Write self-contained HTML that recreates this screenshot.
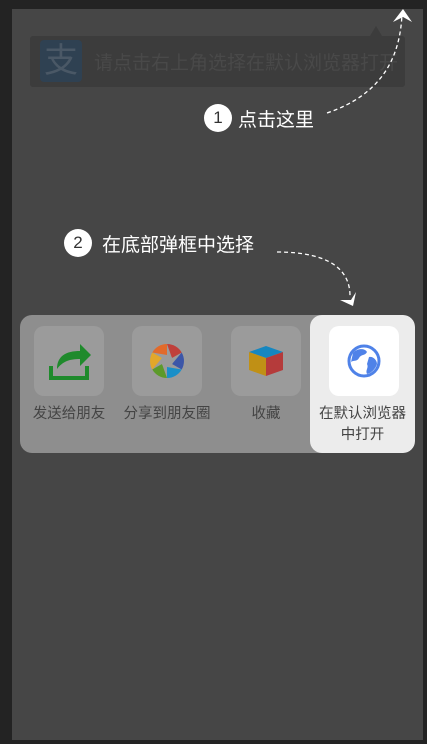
<!DOCTYPE html>
<html><head><meta charset="utf-8"><style>
*{margin:0;padding:0;box-sizing:border-box}
body{width:427px;height:744px;background:#232323;position:relative;overflow:hidden;font-family:"Liberation Sans","Noto Sans CJK SC",sans-serif}
.panel{position:absolute;left:12px;top:9px;width:411px;height:731px;background:#464646}
.banner{position:absolute;left:30px;top:36px;width:375px;height:51px;background:#3c3c3c;border-radius:3px}
.banner .ic{position:absolute;left:10px;top:4px;width:42px;height:42px;background:#2f4152;border-radius:4px;color:#4a5866;font-size:34px;line-height:42px;text-align:center}
.banner .t{position:absolute;left:64px;top:12px;font-size:19px;color:#494949;white-space:nowrap}
.num{position:absolute;width:28px;height:28px;border-radius:50%;background:#fff;color:#333;font-size:17px;line-height:28px;text-align:center}
.lbl{position:absolute;color:#fff;font-size:19px;white-space:nowrap}
.sheet{position:absolute;left:20px;top:315px;width:395px;height:138px;background:#8e8e8e;border-radius:12px;overflow:hidden}
.hl{position:absolute;left:290px;top:0;width:105px;height:138px;background:#ececec;border-radius:12px}
.item{position:absolute;top:11px;width:70px;height:70px;border-radius:10px;background:#9b9b9b}
.cap{position:absolute;top:89px;font-size:14.5px;color:#444;text-align:center;line-height:21px;white-space:nowrap}
</style></head><body>
<div class="panel"></div>
<div class="banner"><div class="ic">支</div><div class="t">请点击右上角选择在默认浏览器打开</div></div>
<svg style="position:absolute;left:0;top:0" width="427" height="744">
<polygon points="370,36 376,26 382,36" fill="#3c3c3c"/>
<path d="M327,113 C380,95 400,60 402,14" stroke="#fff" stroke-width="1.3" fill="none" stroke-dasharray="4,3"/>
<path d="M393,22 L403,9 L412,22 L403,17 Z" fill="#fff"/>
<path d="M277,252 C330,252 350,270 350,296" stroke="#fff" stroke-width="1.3" fill="none" stroke-dasharray="4,3"/>
<path d="M340,300 L353,306 L356,292 L351,300 Z" fill="#fff"/>
</svg>
<div class="num" style="left:204px;top:104px">1</div>
<div class="lbl" style="left:238px;top:105px">点击这里</div>
<div class="num" style="left:64px;top:229px">2</div>
<div class="lbl" style="left:102px;top:230px">在底部弹框中选择</div>
<div class="sheet">
<div class="hl"></div>
<div class="item" style="left:14px"><svg width="70" height="70"><path d="M17,40 v12 h36 v-12" stroke="#1f8a2c" stroke-width="4" fill="none"/><path d="M23,43 C23,30 32,25 46,25 v-7 l11,11 l-11,11 v-7 C36,33 29,35 23,43 Z" fill="#1f8a2c"/></svg></div>
<div class="item" style="left:112px"><svg width="70" height="70"><g transform="translate(35,35)">
<path d="M0,-17 A17,17 0 0 1 14.7,-8.5 L5,-3 Z" fill="#c0403b"/><path d="M14.7,-8.5 A17,17 0 0 1 14.7,8.5 L5,3 Z" fill="#3c56a8"/><path d="M14.7,8.5 A17,17 0 0 1 0,17 L0,6 Z" fill="#1a8fc8"/><path d="M0,17 A17,17 0 0 1 -14.7,8.5 L-5,3 Z" fill="#5c9a2a"/><path d="M-14.7,8.5 A17,17 0 0 1 -14.7,-8.5 L-5,-3 Z" fill="#e2a72a"/><path d="M-14.7,-8.5 A17,17 0 0 1 0,-17 L0,-6 Z" fill="#e26a2a"/><circle r="6" fill="#9b9b9b"/></g></svg></div>
<div class="item" style="left:211px"><svg width="70" height="70"><path d="M18,26 L35,20 L52,26 L35,32 Z" fill="#1687c0"/><path d="M18,26 L35,32 V50 L18,44 Z" fill="#c09015"/><path d="M52,26 L35,32 V50 L52,44 Z" fill="#b53b3b"/></svg></div>
<div class="item" style="left:309px;background:#fff"><svg width="70" height="70"><circle cx="35" cy="35" r="15" fill="none" stroke="#4f82e8" stroke-width="3"/><path d="M24,27 C28,22 36,22 38,26 C36,30 32,28 30,32 C28,36 24,34 22,36 Z M40,31 C44,30 48,34 48,38 C46,44 42,47 38,48 C36,44 40,42 38,38 Z" fill="#4f82e8"/></svg></div>
<div class="cap" style="left:8px;width:82px">发送给朋友</div>
<div class="cap" style="left:97px;width:100px">分享到朋友圈</div>
<div class="cap" style="left:211px;width:70px">收藏</div>
<div class="cap" style="left:290px;width:105px">在默认浏览器<br>中打开</div>
</div>
</body></html>
